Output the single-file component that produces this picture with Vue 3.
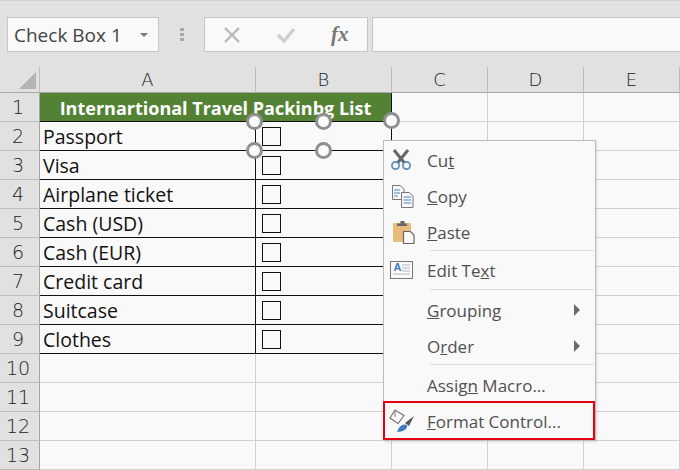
<script setup>
const columns = ['A', 'B', 'C', 'D', 'E']
const items = ['Passport', 'Visa', 'Airplane ticket', 'Cash (USD)', 'Cash (EUR)', 'Credit card', 'Suitcase', 'Clothes']
const emptyRows = [10, 11, 12, 13]
const handles = ['h1', 'h2', 'h3', 'h4', 'h5']
</script>

<template>
  <div class="app">
    <div class="toolbar">
      <div class="namebox">
        <span class="name">Check Box 1</span>
        <span class="caret"></span>
      </div>
      <div class="dots"><i></i><i></i><i></i></div>
      <div class="fgroup">
        <svg class="ic-x" width="18" height="16" viewBox="0 0 18 16"><path d="M2 1L16 15M16 1L2 15" stroke="#b9b9b9" stroke-width="2.4" fill="none"/></svg>
        <svg class="ic-c" width="20" height="16" viewBox="0 0 20 16"><path d="M2 8L8 14L18 2" stroke="#cfcfcf" stroke-width="3.4" fill="none"/></svg>
        <span class="fx">fx</span>
      </div>
      <div class="formula"></div>
    </div>

    <div class="sheet">
      <div class="row head">
        <div class="corner"><span class="tri"></span></div>
        <div v-for="c in columns" :key="c" class="colhead">{{ c }}</div>
      </div>

      <div class="row">
        <div class="rowhead">1</div>
        <div class="cell title">Internartional Travel Packinbg List</div>
        <div class="cell"></div><div class="cell"></div><div class="cell"></div>
      </div>

      <div v-for="(it, i) in items" :key="it" class="row">
        <div class="rowhead">{{ i + 2 }}</div>
        <div class="cell item">{{ it }}</div>
        <div class="cell boxcell"><span class="check"></span></div>
        <div class="cell"></div><div class="cell"></div><div class="cell"></div>
      </div>

      <div v-for="n in emptyRows" :key="n" class="row">
        <div class="rowhead">{{ n }}</div>
        <div class="cell"></div><div class="cell"></div>
        <div class="cell"></div><div class="cell"></div><div class="cell"></div>
      </div>
    </div>

    <span v-for="h in handles" :key="h" class="handle" :class="h"></span>

    <div class="menu">
      <div class="mi">
        <svg class="mic" width="26" height="26" viewBox="0 0 26 26">
          <path d="M5 2L15.5 15M19 2L8.5 15" stroke="#666" stroke-width="3" fill="none"/>
          <circle cx="6.5" cy="17.5" r="3.6" fill="#f9f9f9" stroke="#5b8ac4" stroke-width="1.7"/>
          <circle cx="17.5" cy="17.5" r="3.6" fill="#f9f9f9" stroke="#5b8ac4" stroke-width="1.7"/>
        </svg>
        <span>Cu<u>t</u></span>
      </div>
      <div class="mi">
        <svg class="mic" width="26" height="26" viewBox="0 0 26 26">
          <path d="M3.5 1.5H11L15 5V15.5H3.5Z" fill="#f9f9f9" stroke="#777"/>
          <path d="M5 6H11M5 9H11M5 12H9" stroke="#4f81bd"/>
          <path d="M12.5 8.5H20L24 12V23.5H12.5Z" fill="#f9f9f9" stroke="#777"/>
          <path d="M14.5 13H22M14.5 16H22M14.5 19H22" stroke="#4f81bd"/>
        </svg>
        <span><u>C</u>opy</span>
      </div>
      <div class="mi">
        <svg class="mic" width="26" height="26" viewBox="0 0 26 26">
          <rect x="4" y="3" width="18" height="19" rx="1" fill="#e8bd7c"/>
          <path d="M8 6V3.5H11.5V1H15.5V3.5H18V6Z" fill="#666"/>
          <path d="M14.5 11.5H21.5L25 15V23.5H14.5Z" fill="#f9f9f9" stroke="#666" stroke-width="1.2"/>
        </svg>
        <span><u>P</u>aste</span>
      </div>
      <div class="sep first"></div>
      <div class="mi">
        <svg class="mic" width="26" height="26" viewBox="0 0 26 26">
          <rect x="1.5" y="3.5" width="22" height="17" fill="#fbfbfb" stroke="#777"/>
          <text x="4.5" y="13" class="a-glyph">A</text>
          <path d="M13 7H21M13 10H21M13 13H21M4 16H21" stroke="#b5b5b5"/>
        </svg>
        <span>Edit Te<u>x</u>t</span>
      </div>
      <div class="sep"></div>
      <div class="mi">
        <span class="plain"><u>G</u>rouping</span>
        <span class="arrow"></span>
      </div>
      <div class="mi">
        <span class="plain">O<u>r</u>der</span>
        <span class="arrow"></span>
      </div>
      <div class="sep up"></div>
      <div class="mi">
        <span class="plain">Assig<u>n</u> Macro...</span>
      </div>
      <div class="mi marked">
        <svg class="mic" width="26" height="26" viewBox="0 0 26 26">
          <path d="M1 9L6 1L15 6.5L9 14.5Z" fill="#fbfbfb" stroke="#777" stroke-width="1.2"/>
          <path d="M6 8V1" stroke="#777"/>
          <path d="M8 23C10 17 14 14 18 16C19 20 14 23 8 23Z" fill="#3f7bbf"/>
          <path d="M16 14L25 7L20 17Z" fill="#555"/>
        </svg>
        <span><u>F</u>ormat Control...</span>
      </div>
    </div>
  </div>
</template>

<style>
html, body { margin: 0; padding: 0; background: #e1e1e1; }
</style>

<style scoped>
.app {
  position: relative;
  width: 680px;
  height: 470px;
  overflow: hidden;
  background: #e1e1e1;
  font-family: "Open Sans", "Noto Sans", sans-serif;
}

.toolbar {
  box-sizing: border-box;
  height: 67px;
  display: flex;
  align-items: flex-start;
  padding: 16px 0 0 7px;
  border-top: 1px solid #d2d2d2;
  background: #e1e1e1;
}
.namebox {
  box-sizing: border-box;
  width: 152px;
  height: 35px;
  display: flex;
  align-items: center;
  justify-content: space-between;
  padding: 0 10px 0 6px;
  background: #f9f9f9;
  border: 1px solid #c6c6c6;
  color: #444;
  font-size: 19px;
}
.caret {
  width: 0; height: 0;
  border-left: 4px solid transparent;
  border-right: 4px solid transparent;
  border-top: 4px solid #777;
}
.dots {
  width: 45px;
  height: 35px;
  display: flex;
  flex-direction: column;
  align-items: center;
  justify-content: center;
  gap: 2px;
}
.dots i { width: 4px; height: 3px; background: #a8a8a8; display: block; }
.fgroup {
  box-sizing: border-box;
  width: 164px;
  height: 35px;
  display: flex;
  align-items: center;
  background: #f9f9f9;
  border: 1px solid #c6c6c6;
}
.ic-x { margin-left: 18px; }
.ic-c { margin-left: 35px; }
.fx {
  margin-left: 35px;
  font: italic bold 21px "Liberation Serif", serif;
  color: #777;
}
.formula {
  box-sizing: border-box;
  flex: 1;
  height: 35px;
  margin-left: 4px;
  background: #f9f9f9;
  border: 1px solid #c6c6c6;
  border-right: 0;
}

.sheet { background: #f9f9f9; }
.row {
  display: grid;
  grid-template-columns: 40px 216px 136px 96px 96px 96px;
  grid-template-rows: minmax(0, 1fr);
  height: 29px;
  line-height: 1;
}
.row.head { height: 26px; }
.corner, .colhead, .rowhead {
  box-sizing: border-box;
  background: #e1e1e1;
  font-family: "DejaVu Sans ExtraLight", "DejaVu Sans Light", "DejaVu Sans", sans-serif;
  font-weight: 200;
  color: #222;
}
.corner {
  position: relative;
  border-bottom: 1px solid #a6a6a6;
  border-right: 1px solid #c0c0c0;
}
.tri {
  position: absolute;
  left: 19px;
  top: 5px;
  width: 0; height: 0;
  border-left: 17px solid transparent;
  border-bottom: 17px solid #b4b4b4;
}
.colhead {
  display: flex;
  align-items: center;
  justify-content: center;
  font-size: 18px;
  border-bottom: 1px solid #a6a6a6;
  border-right: 1px solid #bdbdbd;
}
.rowhead {
  display: flex;
  align-items: center;
  justify-content: center;
  padding: 1px 3px 0 0;
  font-size: 19px;
  border-right: 1px solid #a6a6a6;
  border-bottom: 1px solid #bdbdbd;
}
.cell {
  box-sizing: border-box;
  min-width: 0;
  border-right: 1px solid #d0d0d0;
  border-bottom: 1px solid #d0d0d0;
  background: #f9f9f9;
}
.title {
  grid-column: span 2;
  display: flex;
  align-items: center;
  justify-content: center;
  padding-top: 1px;
  background: #548235;
  color: #fff;
  font-family: "Open Sans", sans-serif;
  font-weight: 700;
  font-size: 18px;
  border-right: 1px solid #111;
  border-bottom: 1px solid #111;
}
.item {
  display: flex;
  align-items: center;
  padding: 1px 0 0 3px;
  color: #111;
  font-size: 19.5px;
  border-right: 1px solid #111;
  border-bottom: 1px solid #111;
}
.boxcell {
  display: flex;
  align-items: center;
  padding-left: 6px;
  border-right: 1px solid #111;
  border-bottom: 1px solid #111;
}
.check {
  box-sizing: border-box;
  display: block;
  width: 19px;
  height: 19px;
  border: 1px solid #111;
  background: #f9f9f9;
}

.handle {
  position: absolute;
  box-sizing: border-box;
  width: 17px;
  height: 17px;
  border: 3px solid #8f8f8f;
  border-radius: 50%;
  background: #fbfbfb;
}
.h1 { left: 246px; top: 113px; }
.h2 { left: 315px; top: 113px; }
.h3 { left: 383px; top: 112px; }
.h4 { left: 246px; top: 142px; }
.h5 { left: 315px; top: 142px; }

.menu {
  position: absolute;
  box-sizing: border-box;
  left: 383px;
  top: 140px;
  width: 213px;
  height: 301px;
  padding-top: 2px;
  background: #f9f9f9;
  border: 1px solid #bcbcbc;
  box-shadow: 1px 1px 2px rgba(0, 0, 0, 0.12);
  color: #505050;
  font-size: 17px;
}
.mi {
  position: relative;
  box-sizing: border-box;
  height: 36px;
  display: flex;
  align-items: center;
  padding: 0 0 2px 43px;
  white-space: nowrap;
}
.mic { position: absolute; left: 5px; top: 5px; }
.a-glyph {
  font: bold 11px "Liberation Sans", sans-serif;
  fill: #3f7bbf;
}
.sep {
  height: 1px;
  margin: 0 1px 3px 46px;
  background: #dedede;
}
.sep.first { margin-top: -1px; margin-bottom: 2px; }
.sep.up { margin-top: -1px; }
.arrow {
  position: absolute;
  right: 15px;
  top: 11px;
  width: 0; height: 0;
  border-top: 6px solid transparent;
  border-bottom: 6px solid transparent;
  border-left: 6px solid #6a6a6a;
}
.marked::after {
  content: "";
  position: absolute;
  left: -1px;
  right: 0;
  top: -3px;
  bottom: 0;
  border: 2px solid #e60012;
}
</style>
